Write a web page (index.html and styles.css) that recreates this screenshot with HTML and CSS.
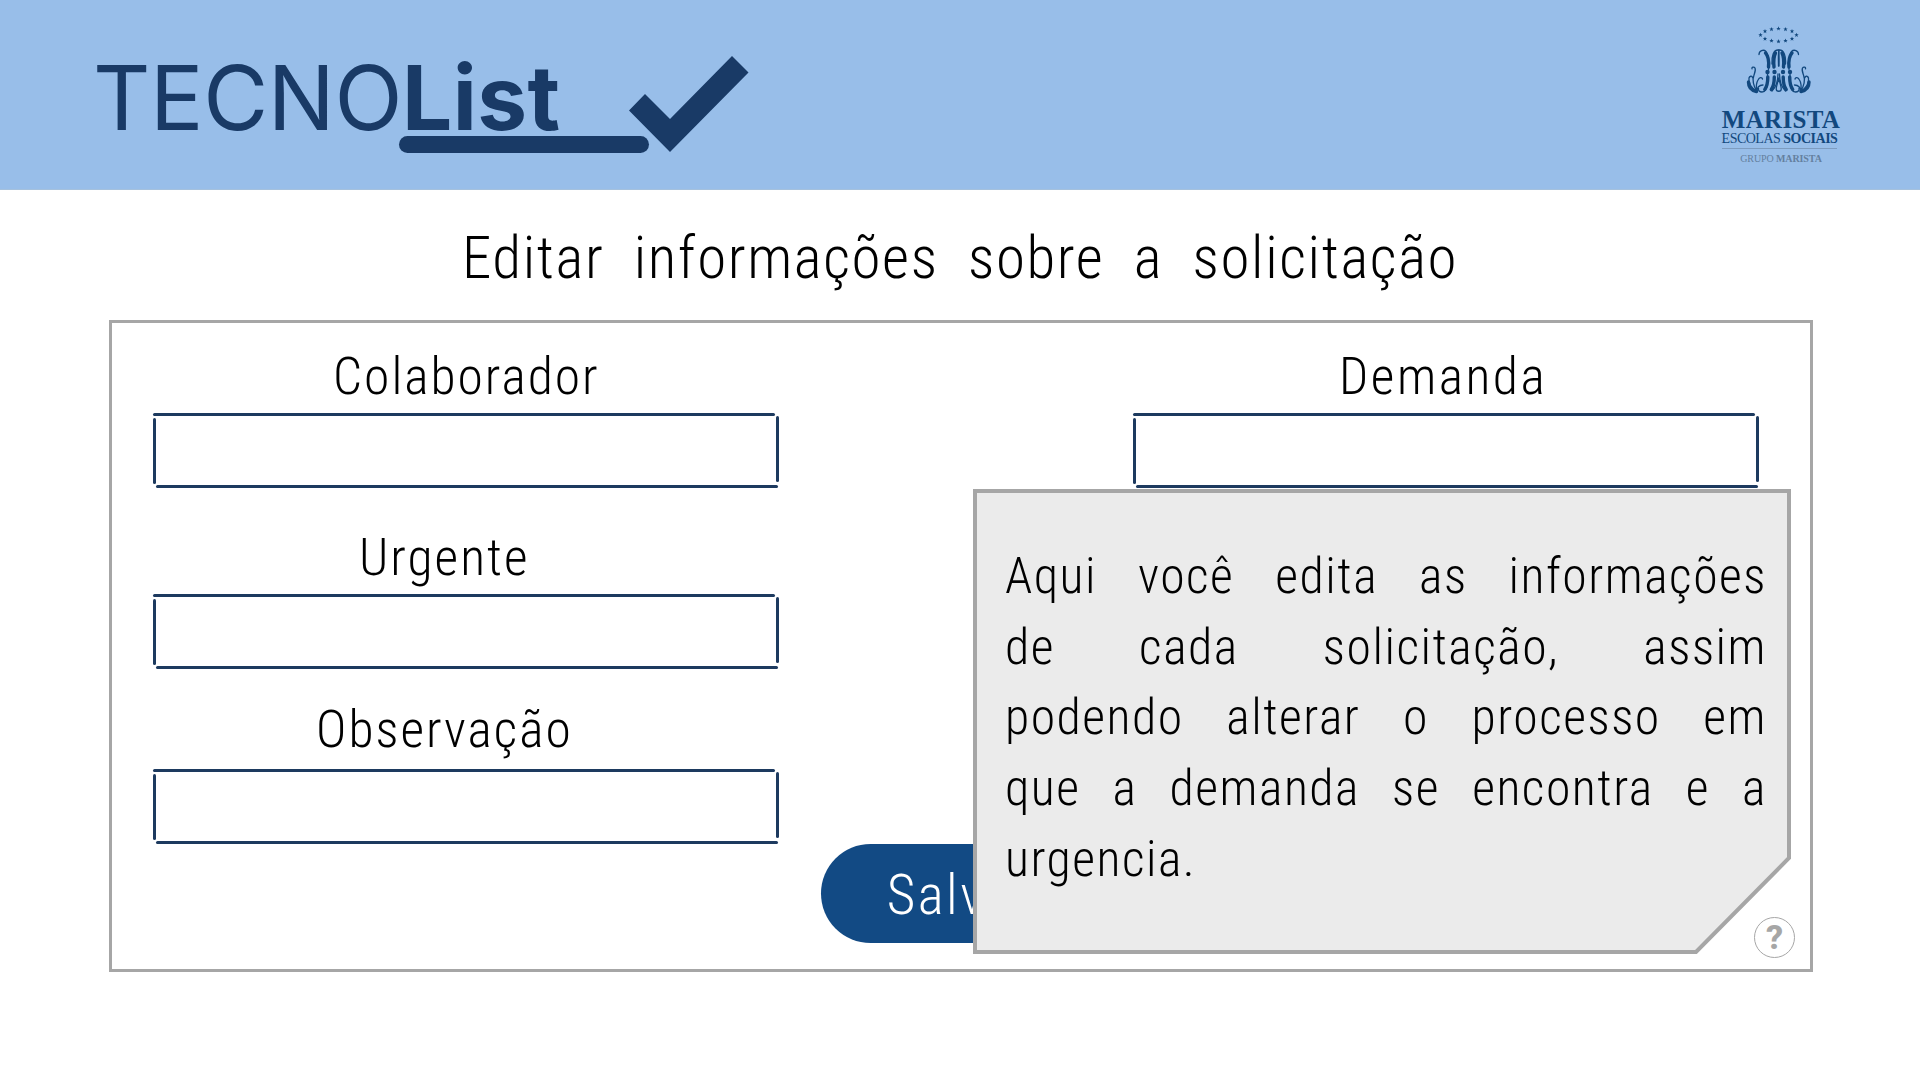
FILE: index.html
```
<!DOCTYPE html>
<html lang="pt-BR">
<head>
<meta charset="utf-8">
<title>TECNOList</title>
<link rel="stylesheet" href="styles.css">
</head>
<body>
<header class="topbar">
  <div class="brand">
    <span class="brand-light">TECNO</span><span class="brand-bold">List</span>
    <span class="brand-underline"></span>
    <svg class="brand-check" viewBox="0 0 120 96"><path d="M0 54.500 16 38 41 63 103 0 119.500 16.500 41 96Z"/></svg>
  </div>
  <div class="marista">
    <svg class="emblem" viewBox="0 0 66 68">
      <defs>
        <path id="star" d="M0-2.300.6-.7 2.200-.7.9.3 1.400 1.900 0 1-1.400 1.900-.9.300-2.200-.7-.6-.7Z"/>
        <g id="half">
          <path class="line" d="M13 18.500c0-4 4.500-5.500 7-3 3 3 2.500 10 2.500 18M21.500 36v8c0 8-1.500 12-5.500 12-2.500 0-4-1.500-3.500-3.500"/>
          <path class="fat" d="M19.500 17c3.500 4 3.500 9 3 14M21.800 41c0 6-.5 9-3 12.500"/>
          <path class="fat" d="M29.500 17c-2 4-2 9-1.500 14M28.300 41c0 5-.5 9-3 12.500"/>
          <path class="line" d="M32 14c-4.500 0-6.500 6-6 14M33 14c-1 5-.5 10-.5 16M32 38c0 7-2 13-6 17"/>
          <circle cx="21.500" cy="36" r="2.200"/><circle cx="28.500" cy="36" r="2.200"/>
          <path class="fat" d="M2.500 46c0 5 3 8.500 8 9.500"/>
          <path class="line" d="M11 56c-5-4-9-9-8-14 .5-2 3-2.500 3.500-.5M11 56C7 49 6 44 8 39c1.500-4 2-5 1-7-1-1.500-3.500-1-3 .8M11 56c-1-5-1-9 1-12 1.500-3 4-3 4.500-1M11 56c0-4 2-7 6-7"/>
        </g>
      </defs>
      <g>
        <use href="#star" x="14.500" y="9"/><use href="#star" x="19" y="5.300"/><use href="#star" x="25.500" y="3.300"/><use href="#star" x="32.500" y="2.600"/><use href="#star" x="39.500" y="3.300"/><use href="#star" x="46" y="5.300"/><use href="#star" x="50.500" y="9"/><use href="#star" x="46" y="12.800"/><use href="#star" x="39.500" y="14.700"/><use href="#star" x="32.500" y="15.400"/><use href="#star" x="25.500" y="14.700"/><use href="#star" x="19" y="12.800"/>
      </g>
      <g transform="translate(0 10)"><use href="#half"/><use href="#half" transform="translate(65.500 0) scale(-1 1)"/><path class="line" d="M32.750 42c-1 5-2.500 8-2.500 11s5 3 5 0-1.500-6-2.500-11"/></g>
    </svg>
    <div class="m-name">MARISTA</div>
    <div class="m-sub">ESCOLAS <b>SOCIAIS</b></div>
    <div class="m-group">GRUPO <b>MARISTA</b></div>
  </div>
</header>
<main>
  <h1 class="title">Editar informações sobre a solicitação</h1>
  <section class="panel">
    <div class="column">
      <label class="field"><span class="label l-colab">Colaborador</span><span class="box"><i></i></span></label>
      <label class="field"><span class="label l-urg">Urgente</span><span class="box"><i></i></span></label>
      <label class="field f-obs"><span class="label l-obs">Observação</span><span class="box"><i></i></span></label>
    </div>
    <div class="column">
      <label class="field"><span class="label l-dem">Demanda</span><span class="box"><i></i></span></label>
    </div>
    <button class="save">Salvar</button>
    <aside class="tip">
      <svg class="tip-shape" viewBox="0 0 819 465"><path d="M2 2H816V369L723 463H2Z"/></svg>
      <p>Aqui você edita as informações de cada solicitação, assim podendo alterar o processo em que a demanda se encontra e a urgencia.</p>
    </aside>
    <span class="help">?</span>
  </section>
</main>
</body>
</html>
```
FILE: styles.css
```
* { box-sizing: border-box; }
body {
  margin: 0;
  width: 1920px;
  height: 1080px;
  overflow: hidden;
  background: #fff;
  color: #000;
  font-family: Roboto, sans-serif;
  font-weight: 300;
  font-stretch: 75%;
}

.topbar {
  height: 190px;
  padding: 0 79px 0 92px;
  display: flex;
  justify-content: space-between;
  background: #98bee9;
  border-bottom: 1px solid #a5c1dd;
}
.brand {
  position: relative;
  width: 660px;
  padding: 44px 0 0 1px;
  font-family: Inter, sans-serif;
  font-stretch: 100%;
  font-size: 89px;
  line-height: 108px;
  color: #193a66;
  white-space: nowrap;
}
.brand-light { font-weight: 400; letter-spacing: -.4px; }
.brand-bold { font-weight: 700; letter-spacing: .4px; }
.brand-underline {
  position: absolute;
  left: 307px;
  top: 136px;
  width: 250px;
  height: 17px;
  border-radius: 9px;
  background: #193a66;
}
.brand-check {
  position: absolute;
  left: 537px;
  top: 56px;
  width: 120px;
  height: 96px;
  fill: #193a66;
}

.marista {
  width: 120px;
  margin-top: 26px;
  display: flex;
  flex-direction: column;
  align-items: center;
  font-family: "Liberation Serif", serif;
  font-stretch: 100%;
  font-weight: 400;
  white-space: nowrap;
  color: #12487e;
}
.emblem { width: 66px; height: 68px; margin-right: 5px; fill: #12487e; }
.line { fill: none; stroke: #12487e; stroke-width: 1.3; stroke-linecap: round; }
.fat { fill: none; stroke: #12487e; stroke-width: 3.4; stroke-linecap: round; }
.m-name { margin-top: 11px; font-size: 25px; line-height: 29px; font-weight: 700; letter-spacing: .3px; }
.m-sub { margin: -2px 3px 0 0; font-size: 14px; line-height: 13px; padding-bottom: 3px; border-bottom: 1px solid #7d9cc0; letter-spacing: -.5px; }
.m-group { margin-top: 4px; font-size: 10px; line-height: 11px; color: #64809f; letter-spacing: -.1px; }

.title {
  margin: 33px 0 0;
  height: 97px;
  font-size: 59px;
  line-height: 69px;
  font-weight: 300;
  letter-spacing: 1.6px;
  word-spacing: 14.5px;
  text-align: center;
  white-space: nowrap;
}

.panel {
  position: relative;
  width: 1704px;
  height: 652px;
  margin-left: 109px;
  padding: 23px 52px 0 41px;
  display: flex;
  justify-content: space-between;
  border: 3px solid #a6a6a6;
}
.column { width: 625px; }
.field { display: block; height: 181px; }
.f-obs { margin-top: -6px; }
.label {
  display: block;
  height: 67px;
  padding-top: 1px;
  font-size: 51.5px;
  line-height: 60px;
  letter-spacing: 2px;
}
.l-colab { padding-left: 180px; }
.l-urg { padding-left: 206px; }
.l-obs { padding-left: 163px; line-height: 54px; }
.l-dem { padding-left: 206px; letter-spacing: 2.5px; }

/* Each side of a box is its own stroke, with open corners. */
.box { position: relative; display: block; height: 75px; }
.box::before, .box::after, .box i::before, .box i::after {
  content: "";
  position: absolute;
  border-radius: 2px;
  background: #1d3a5f;
}
.box::before { left: 0; top: 0; width: 622px; height: 3px; }
.box::after { left: 3px; bottom: 0; width: 622px; height: 3px; }
.box i::before { left: 0; top: 5px; width: 3px; height: 66px; }
.box i::after { right: -1px; top: 3px; width: 3px; height: 66px; }

.save {
  position: absolute;
  left: 709px;
  top: 521px;
  width: 278px;
  height: 99px;
  padding: 2px 0 0;
  border: 0;
  border-radius: 50px;
  background: #124a84;
  color: #fff;
  font: inherit;
  font-size: 55px;
  letter-spacing: 2.500px;
}
.tip {
  position: absolute;
  left: 861px;
  top: 166px;
  width: 819px;
  height: 465px;
  padding: 52px 25px 0 32px;
}
.tip-shape {
  position: absolute;
  left: 0;
  top: 0;
  width: 819px;
  height: 465px;
  fill: #ebebeb;
  stroke: #a6a6a6;
  stroke-width: 4;
}
.tip p {
  position: relative;
  margin: 0;
  font-size: 49.7px;
  line-height: 70.7px;
  letter-spacing: 1.5px;
  word-spacing: 15px;
  text-align: justify;
}
.help {
  position: absolute;
  left: 1642px;
  top: 594px;
  width: 41px;
  height: 41px;
  border: 1.5px solid #a6a6a6;
  border-radius: 50%;
  color: #a6a6a6;
  font-size: 34px;
  font-weight: 800;
  font-stretch: 100%;
  line-height: 38px;
  text-align: center;
}
```
